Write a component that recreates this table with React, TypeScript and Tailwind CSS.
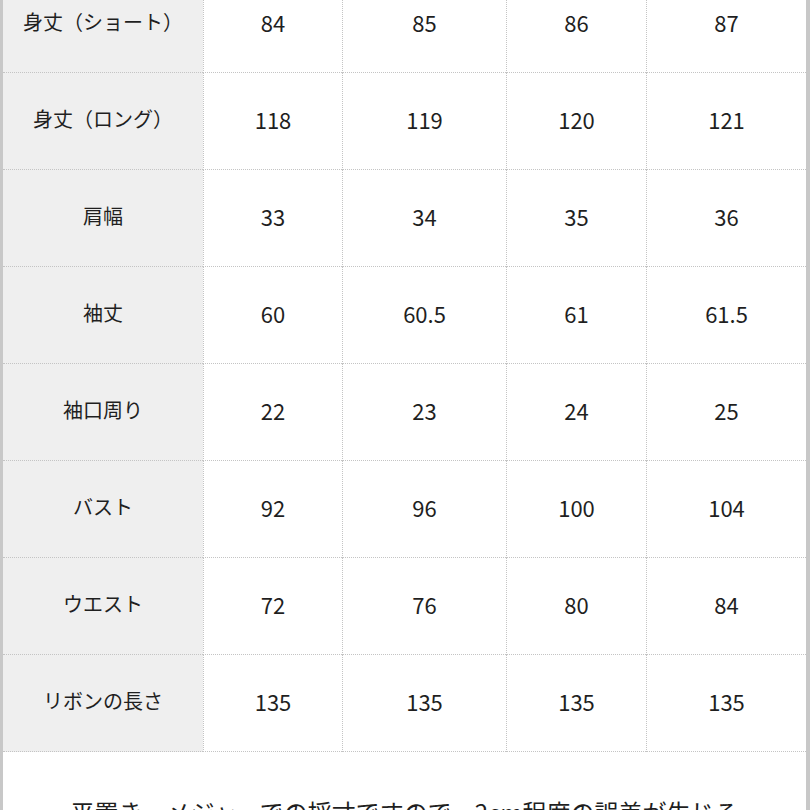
const rows: [string, string, string, string, string][] = [
  ["身丈（ショート）", "84", "85", "86", "87"],
  ["身丈（ロング）", "118", "119", "120", "121"],
  ["肩幅", "33", "34", "35", "36"],
  ["袖丈", "60", "60.5", "61", "61.5"],
  ["袖口周り", "22", "23", "24", "25"],
  ["バスト", "92", "96", "100", "104"],
  ["ウエスト", "72", "76", "80", "84"],
  ["リボンの長さ", "135", "135", "135", "135"],
];

export default function App() {
  return (
    <div
      className="w-[810px] min-h-[810px] overflow-hidden bg-white text-[#1f1f1f]"
      style={{ fontFamily: '"Noto Sans CJK JP", "Noto Sans", sans-serif' }}
    >
      <div className="border-l-[3px] border-r-[4px] border-[#c8c8c8] -mt-[24px]">
        <div className="grid grid-cols-[200px_139px_164px_140px_160px]">
          {rows.map((r) => (
            <div key={r[0]} className="contents">
              <div className="h-[97px] pb-1 flex items-center justify-center bg-[#efefef] border-b border-dotted border-[#c4c4c4] text-[20px]">
                {r[0]}
              </div>
              {r.slice(1).map((v, i) => (
                <div
                  key={i}
                  className="h-[97px] pb-1 flex items-center justify-center border-l border-b border-dotted border-[#c4c4c4] text-[22px]"
                >
                  {v}
                </div>
              ))}
            </div>
          ))}
        </div>
        <div className="pt-[42px] pb-10 text-center text-[24px] leading-[1.5]">
          平置き・メジャーでの採寸ですので、2cm程度の誤差が生じる
          <br />
          場合がございます。
        </div>
      </div>
    </div>
  );
}
